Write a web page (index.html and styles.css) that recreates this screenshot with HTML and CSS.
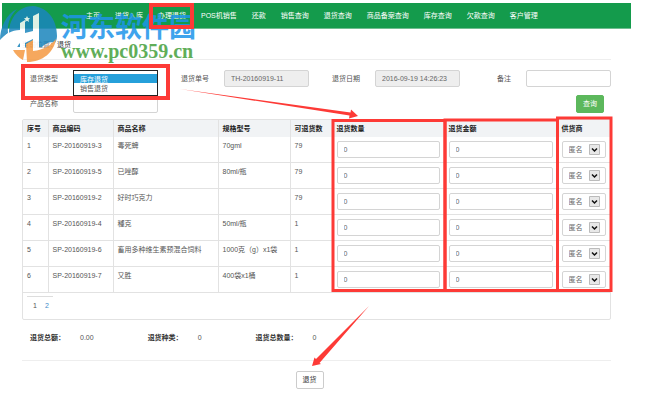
FILE: index.html
```html
<!DOCTYPE html>
<html lang="zh-CN">
<head>
  <meta charset="UTF-8">
  <title>办理退货</title>
  <link rel="stylesheet" href="styles.css">
</head>
<body>

  <nav class="navbar">
    <a href="#">主页</a>
    <a href="#">进货入库</a>
    <a href="#">办理退货</a>
    <a href="#">POS机销售</a>
    <a href="#">还款</a>
    <a href="#">销售查询</a>
    <a href="#">退货查询</a>
    <a href="#">商品备案查询</a>
    <a href="#">库存查询</a>
    <a href="#">欠款查询</a>
    <a href="#">客户管理</a>
  </nav>

  <main class="container">
    <div class="crumb">当前位置：<span>退货</span></div>

    <form class="search">
      <label for="type">退货类型</label>
      <div class="dropdown">
        <select id="type" class="dropdown-list" size="2">
          <option selected>库存退货</option>
          <option>销售退货</option>
        </select>
      </div>
      <label for="order-no">退货单号</label>
      <input type="text" id="order-no" class="field" value="TH-20160919-11" readonly>
      <label for="date">退货日期</label>
      <input type="text" id="date" class="field" value="2016-09-19 14:26:23" readonly>
      <label for="remark">备注</label>
      <input type="text" id="remark" class="field">

      <label for="product">产品名称</label>
      <input type="text" id="product" class="field">
      <button type="button" class="btn btn-success">查询</button>
    </form>

    <div class="panel">
      <table class="goods">
        <colgroup>
          <col class="c-no"><col class="c-code"><col class="c-name"><col class="c-spec">
          <col class="c-left"><col class="c-qty"><col class="c-sum"><col class="c-supplier">
        </colgroup>
        <thead>
          <tr>
            <th>序号</th><th>商品编码</th><th>商品名称</th><th>规格型号</th>
            <th>可退货数</th><th>退货数量</th><th>退货金额</th><th>供货商</th>
          </tr>
        </thead>
        <tbody>
          <tr>
            <td>1</td><td>SP-20160919-3</td><td>毒死蜱</td><td>70gml</td><td>79</td>
            <td><input type="text" class="field" value="0" aria-label="退货数量"></td>
            <td><input type="text" class="field" value="0" aria-label="退货金额"></td>
            <td><select class="field supplier" aria-label="供货商"><option>匿名</option></select></td>
          </tr>
          <tr>
            <td>2</td><td>SP-20160919-5</td><td>已唑醇</td><td>80ml/瓶</td><td>79</td>
            <td><input type="text" class="field" value="0" aria-label="退货数量"></td>
            <td><input type="text" class="field" value="0" aria-label="退货金额"></td>
            <td><select class="field supplier" aria-label="供货商"><option>匿名</option></select></td>
          </tr>
          <tr>
            <td>3</td><td>SP-20160919-2</td><td>好时巧克力</td><td></td><td>79</td>
            <td><input type="text" class="field" value="0" aria-label="退货数量"></td>
            <td><input type="text" class="field" value="0" aria-label="退货金额"></td>
            <td><select class="field supplier" aria-label="供货商"><option>匿名</option></select></td>
          </tr>
          <tr>
            <td>4</td><td>SP-20160919-4</td><td>種克</td><td>50ml/瓶</td><td>1</td>
            <td><input type="text" class="field" value="0" aria-label="退货数量"></td>
            <td><input type="text" class="field" value="0" aria-label="退货金额"></td>
            <td><select class="field supplier" aria-label="供货商"><option>匿名</option></select></td>
          </tr>
          <tr>
            <td>5</td><td>SP-20160919-6</td><td>畜用多种维生素预混合饲料</td><td>1000克（g）x1袋</td><td>1</td>
            <td><input type="text" class="field" value="0" aria-label="退货数量"></td>
            <td><input type="text" class="field" value="0" aria-label="退货金额"></td>
            <td><select class="field supplier" aria-label="供货商"><option>匿名</option></select></td>
          </tr>
          <tr>
            <td>6</td><td>SP-20160919-7</td><td>又胜</td><td>400袋x1桶</td><td>1</td>
            <td><input type="text" class="field" value="0" aria-label="退货数量"></td>
            <td><input type="text" class="field" value="0" aria-label="退货金额"></td>
            <td><select class="field supplier" aria-label="供货商"><option>匿名</option></select></td>
          </tr>
        </tbody>
      </table>
      <div class="pager">
        <div class="pages"><span>1</span><a href="#">2</a></div>
      </div>
    </div>

    <dl class="totals">
      <div><dt>退货总额：</dt><dd>0.00</dd></div>
      <div><dt>退货种类：</dt><dd>0</dd></div>
      <div><dt>退货总数量：</dt><dd>0</dd></div>
    </dl>

    <div class="actions">
      <button type="button" class="btn">退货</button>
    </div>
  </main>

  <!-- step marks and site watermark, drawn over the page -->
  <svg class="marks" width="648" height="413" viewBox="0 0 648 413">
    <g class="watermark">
      <path class="blue" d="M0 40 C0 28 6 14 17 9 C10 16 7 24 8 33 C5 35 2 38 0 40 Z"/>
      <path class="blue" d="M9 33 C9 17 20 6 33 6 C47 7 57 19 57 36 C57 39 56 41 55 43 C50 41 46 43 42 47 L16 47 C11 44 9 39 9 33 Z"/>
      <path class="light" d="M0 42 C4 34 12 30 20 30 L20 23 L25 20 L25 33 L33 31 L33 16 L39 13 L39 48 L33 51 L33 39 L25 43 L25 54 L20 57 L20 43 C18 45 17 47 16 50 C8 49 7 42 8 37 C5 38 3 40 0 42 Z"/>
      <path class="orange" d="M13 50 L25 50 L23 60 C19 58 15 54 13 50 Z"/>
      <path class="orange" d="M26 44 L33 40 L33 51 C44 50 51 45 56 39 C54 52 43 62 27 62 Z"/>
      <path class="light" d="M27 16 l1 2 2 .2 -1.500 1.500 .5 2.300 -2 -1.200 -2 1.200 .5 -2.300 -1.500 -1.500 2 -.2 Z"/>
      <text class="site-name" x="61" y="37">河东软件园</text>
      <text class="site-url" x="61" y="58">www.pc0359.cn</text>
    </g>
    <g class="frames">
      <rect x="151" y="5" width="41" height="22"/>
      <rect x="23" y="66" width="145" height="32"/>
      <rect x="333" y="120.500" width="112" height="170"/>
      <rect x="445" y="120" width="112.500" height="170.500"/>
      <rect x="557.500" y="118" width="53.500" height="172.500"/>
    </g>
    <g class="arrows">
      <path d="M180 89 L350.500 112.500 L351 109.500 L358 116 L349 118.500 L349.500 115.500 Z"/>
      <path d="M369 306 L319.500 363 L321 364 L312 366 L314.500 357.500 L316 359 Z"/>
    </g>
  </svg>

</body>
</html>
```
FILE: styles.css
```css
* { box-sizing: border-box; }
body { margin: 3px 17px 0 2px; background: #fff; color: #555; font: 7px/10px "Liberation Sans", "Noto Sans CJK SC", sans-serif; }
a { color: #428bca; text-decoration: none; }
input, select, button { font: inherit; color: inherit; }

.navbar { display: flex; align-items: center; gap: 15px; height: 26px; padding-left: 84px; background: #149b4c; border-bottom: 1px solid #6fbd90; white-space: nowrap; }
.navbar a { color: #fff; }

.container { padding: 0 20px; }
.crumb { padding: 11px 0 9px; border-bottom: 1px solid #eee; color: #888; }
.crumb span { color: #333; }

/* search form */
.search { display: grid; grid-template-columns: repeat(4, 36px 1fr); gap: 8px 15px; align-items: center; padding: 10px 0 6px; }
.search label { text-align: right; white-space: nowrap; }
.field { display: block; width: 100%; min-width: 0; height: 17px; margin: 0; padding: 0 6px; border: 1px solid #d4d4d4; border-radius: 2px; background: #fff; color: #666; }
.field[readonly] { background: #eee; }
.dropdown { position: relative; height: 17px; }
.dropdown-list { position: absolute; top: 0; left: 0; z-index: 1; width: 100%; height: 26px; padding: 3px 0; border: 1px solid #222; border-radius: 0; background: #fff; overflow: hidden; }
.dropdown-list option { min-height: 0; height: 9px; padding: 0 6px; line-height: 9px; }
.dropdown-list option:checked { background: #26a0da linear-gradient(#26a0da, #26a0da); color: #fff; }

.btn { height: 18px; padding: 0 6px; border: 1px solid #ccc; border-radius: 2px; background: #fff; color: #333; }
.btn-success { grid-column: 8; justify-self: end; margin-right: 7px; border-color: #5cb85c; background: #5cb85c; color: #fff; }

/* goods table */
.panel { border: 1px solid #e2e2e2; border-radius: 2px; }
.goods { width: 100%; table-layout: fixed; border-collapse: collapse; }
.c-no { width: 25px; }
.c-code { width: 65px; }
.c-name { width: 105px; }
.c-spec { width: 72px; }
.c-left { width: 42px; }
.c-qty { width: 112px; }
.c-sum { width: 113px; }
.c-supplier { width: 53px; }
.goods th, .goods td { padding: 4px; border-right: 1px solid #e2e2e2; border-bottom: 1px solid #e2e2e2; text-align: left; vertical-align: top; white-space: nowrap; }
.goods th { height: 17px; padding-bottom: 3px; border-bottom: 0; background: #f1f3f5; color: #222; }
.goods th:last-child, .goods td:last-child { border-right: 0; }
.supplier { appearance: none; background: url("data:image/svg+xml,%3Csvg xmlns='http://www.w3.org/2000/svg' width='11' height='11'%3E%3Cpath d='M.5.5h10v10H.5z' fill='%23e8e8e8' stroke='%23bbb'/%3E%3Cpath d='M3 4.500l2.500 2.500L8 4.500' fill='none' stroke='%23111' stroke-width='1.500'/%3E%3C/svg%3E") no-repeat right 5px center; }

.pager { padding: 3px 4px; height: 26px; }
.pages { display: inline-flex; gap: 8px; padding: 4px 4px 0 6px; border-top: 1px solid #ddd; }

.totals { display: flex; gap: 54px; margin: 0; padding: 13px 8px 17px; border-bottom: 1px solid #eee; }
.totals div { display: flex; gap: 15px; }
.totals dt { font-weight: bold; color: #333; }
.totals dd { margin: 0; }
.actions { padding: 10px 14px 0 0; text-align: center; }

/* marks over the page */
.marks { position: absolute; top: 0; left: 0; z-index: 2; pointer-events: none; }
.frames { fill: none; stroke: #fd3a36; stroke-width: 3px; }
.frames rect:nth-child(-n+2) { stroke-width: 4px; }
.arrows { fill: #fd3a36; }
.watermark { opacity: .85; }
.blue { fill: #1b86bd; }
.orange { fill: #f59a42; }
.light { fill: #fff; }
.site-name { fill: #1e95ea; font: bold 27px "Noto Sans CJK SC", sans-serif; }
.site-url { fill: #45a03c; font: bold 20px "Liberation Serif", serif; }
```
